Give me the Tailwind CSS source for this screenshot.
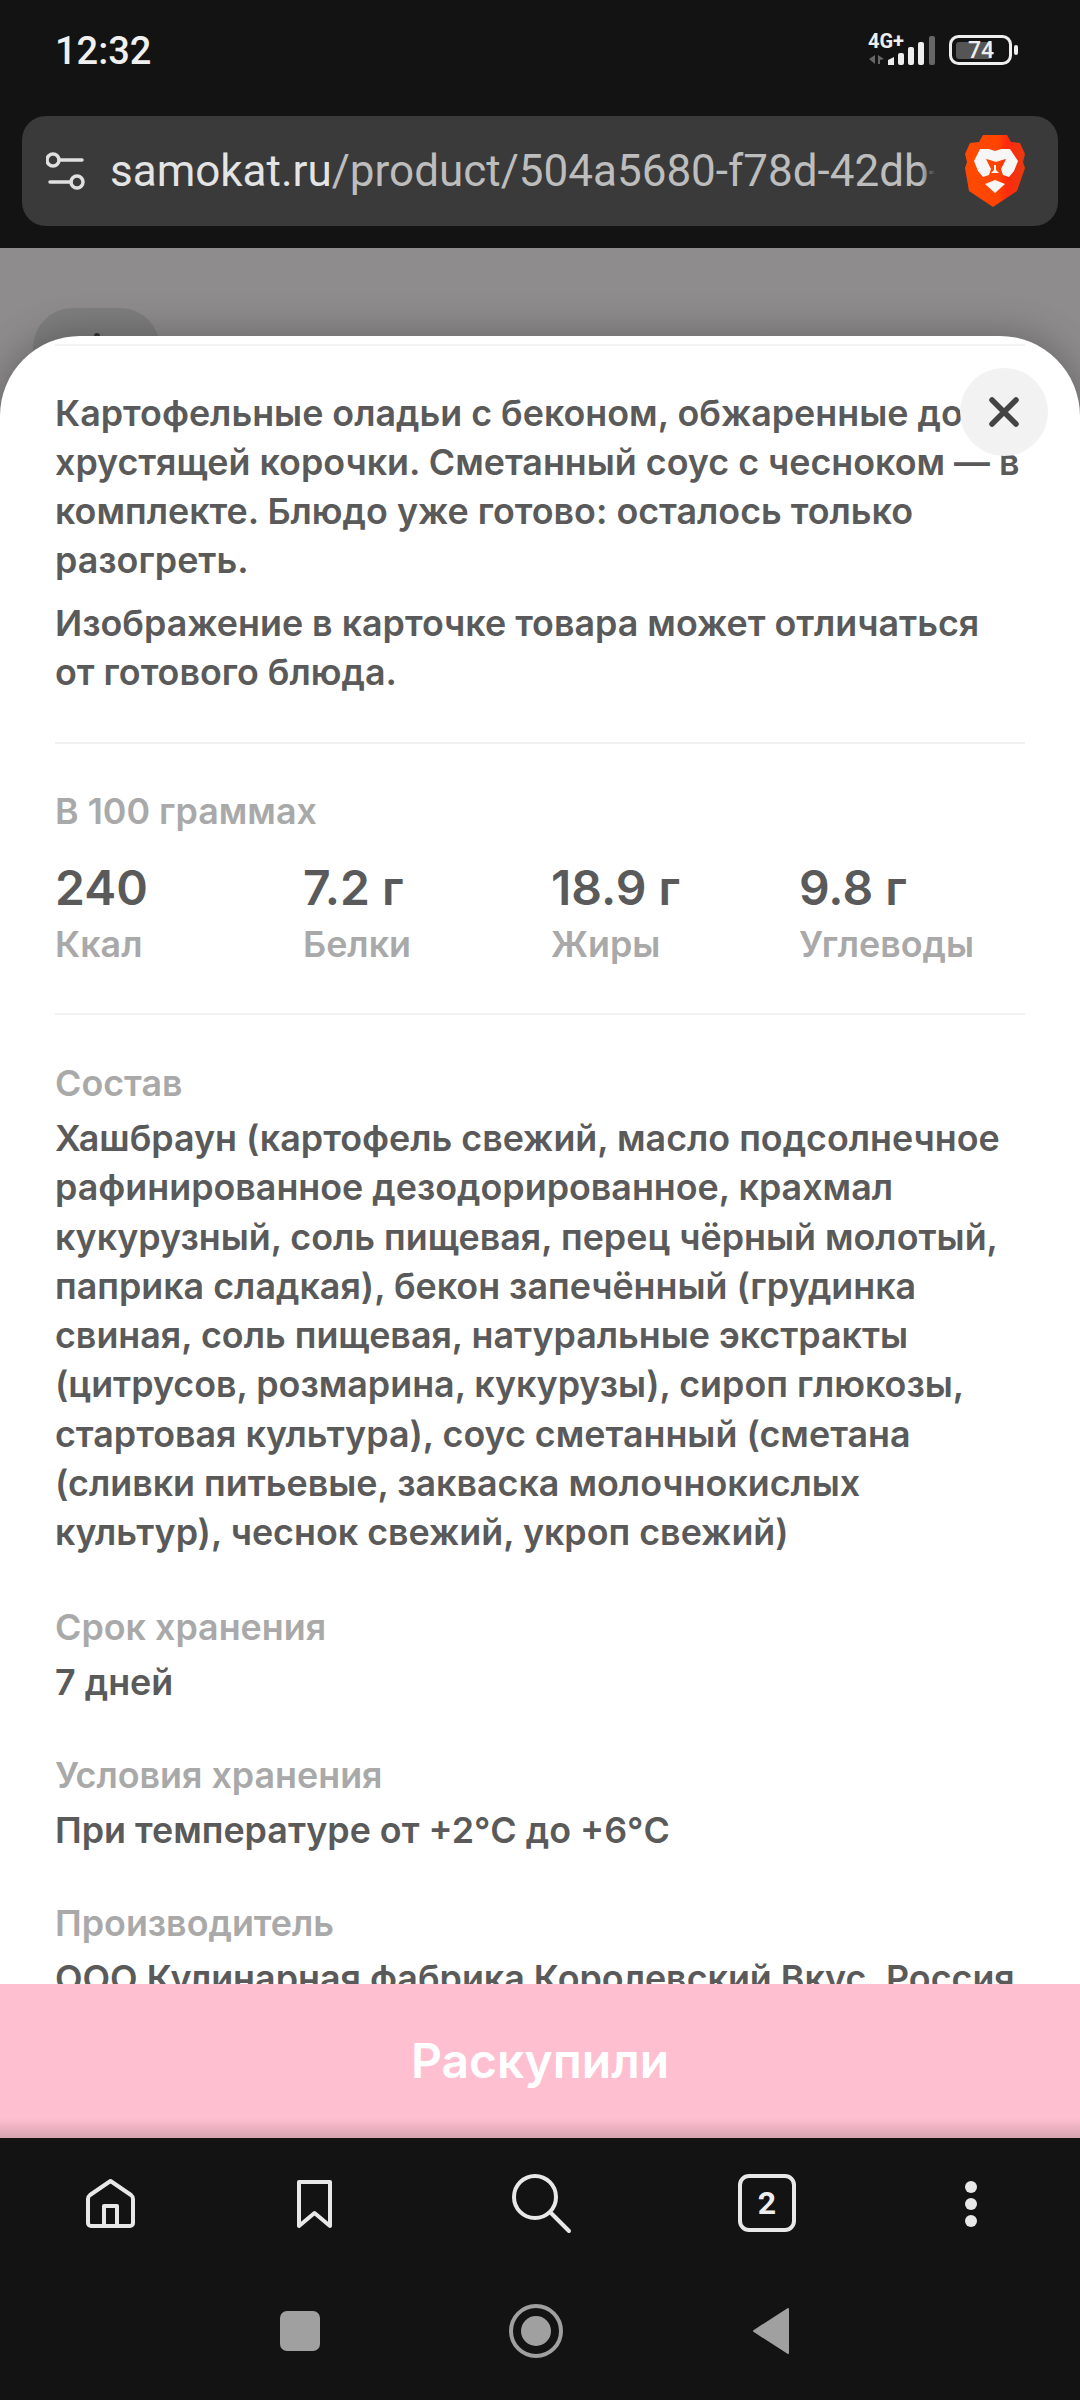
<!DOCTYPE html>
<html lang="ru">
<head>
  <meta charset="UTF-8" />
  <meta name="viewport" content="width=device-width, initial-scale=1.0" />
  <title>Samokat</title>
  <script src="https://cdn.jsdelivr.net/npm/@tailwindcss/browser@4"></script>
</head>
<body class="w-[1080px] h-[2400px] overflow-hidden bg-[#131313] font-['Inter',sans-serif] flex flex-col">
  <!-- Status bar -->
  <div class="h-[116px] shrink-0 pl-[55px] pr-[62px] pt-[30px] flex justify-between items-start">
    <span class="font-['Roboto',sans-serif] text-[38px] leading-[42px] font-medium text-[#f0f0f0]">12:32</span>
    <div class="relative w-[150px] h-[40px] mt-[4px]">
      <span class="absolute left-0 top-[-2px] font-['Roboto',sans-serif] text-[20px] leading-[18px] font-bold text-[#eee]">4G+</span>
      <svg class="absolute left-0 top-0" width="150" height="40" viewBox="868 34 150 40">
        <path d="M875 55v9l-6-5zM878 55l6 4-4 1v4h-2z" fill="#666"/>
        <path d="M888 65v-5l6-3v8z" fill="#eee"/>
        <rect x="898" y="53" width="6" height="12" rx="2" fill="#eee"/>
        <rect x="908" y="47" width="6" height="18" rx="2" fill="#eee"/>
        <rect x="918" y="42" width="6" height="23" rx="2" fill="#eee"/>
        <rect x="929" y="36" width="6" height="29" rx="2" fill="#666"/>
        <rect x="950.500" y="36.500" width="60" height="27" rx="8" fill="none" stroke="#eee" stroke-width="3"/>
        <rect x="956" y="42" width="36" height="17" rx="3" fill="#555"/>
        <rect x="1014" y="45" width="4" height="10" rx="2" fill="#eee"/>
      </svg>
      <span class="absolute left-[88px] top-[4px] w-[50px] text-center font-['Roboto',sans-serif] text-[23px] leading-[26px] font-medium text-[#eee]">74</span>
    </div>
  </div>

  <!-- Address bar -->
  <div class="mx-[22px] h-[110px] shrink-0 rounded-[24px] bg-[#3a3a3a] flex items-center pl-[24px]">
    <svg class="shrink-0" width="42" height="42" viewBox="0 0 42 42" fill="none" stroke="#e0e0e0" stroke-width="3.500" stroke-linecap="round">
      <circle cx="7" cy="10" r="6"/>
      <path d="M13 10h23M4 32h21"/>
      <circle cx="31" cy="32" r="6"/>
    </svg>
    <div class="relative ml-[22px] w-[825px] overflow-hidden whitespace-nowrap font-['Roboto',sans-serif] text-[44px] leading-[56px] text-[#bdbdbd]">
      <span class="text-[#e4e4e4]">samokat.ru</span>/product/504a5680-f78d-42db-8
      <div class="absolute right-0 inset-y-0 w-[14px] bg-gradient-to-r from-transparent to-[#3a3a3a]"></div>
    </div>
    <svg class="ml-[30px] shrink-0" width="60" height="72" viewBox="0 0 60 72">
      <defs>
        <linearGradient id="brave" x1="0" y1="0" x2="1" y2="0">
          <stop offset="0" stop-color="#ff4a00"/>
          <stop offset="0.55" stop-color="#ff4400"/>
          <stop offset="0.7" stop-color="#ff2a0d"/>
          <stop offset="1" stop-color="#e83a10"/>
        </linearGradient>
      </defs>
      <path d="M18 0h24l4 7 9 1 5 11-2 8 2 6-8 23-24 16-24-16-4-23 2-6-2-8L5 8l9-1z" fill="url(#brave)"/>
      <path d="M15 14h9l6 2 6-2h9l8 12-4 10-5 6-6-2-2-6 5-10-4 1-6 2-6-2-4-1 5 10-2 6-6 2-5-6-4-10zM29 30h2v5l3 3h-8l3-3zM20 49l10-4 10 4-10 9z" fill="#f6f6f6"/>
    </svg>
  </div>
  <div class="h-[22px] shrink-0"></div>

  <!-- Page under the sheet -->
  <main class="relative flex-1 overflow-hidden bg-gradient-to-b from-[#8e8c8c] via-[#8a8888] to-[#767575]">
    <div class="absolute left-[33px] top-[60px] w-[127px] h-[94px] rounded-[40px] bg-[#7f7e7e] flex justify-center pt-[25px]">
      <span class="w-[6px] h-[6px] rounded-t-[3px] bg-[#333]"></span>
    </div>

    <!-- Bottom sheet -->
    <section class="absolute inset-x-0 top-[88px] bottom-0 overflow-hidden bg-white rounded-t-[80px] shadow-[0_0_40px_rgba(0,0,0,0.3)]">
      <div class="mx-[55px] mt-[8px] h-[2px] bg-[#f3f3f3]"></div>
      <div class="pl-[55px] pr-[40px] pt-[43px] text-[35.850px] leading-[49px] font-semibold text-[#5a5a5a] whitespace-nowrap">
        <p>Картофельные оладьи с беконом, обжаренные до<br>хрустящей корочки. Сметанный соус с чесноком — в<br>комплекте. Блюдо уже готово: осталось только<br>разогреть.</p>
        <p class="mt-[14px]">Изображение в карточке товара может отличаться<br>от готового блюда.</p>

        <div class="mt-[45px] mr-[15px] border-t-2 border-[#f1f1f1] pt-[43px]">
          <p class="text-[#a9a9a9]">В 100 граммах</p>
          <div class="mt-[20px] grid grid-cols-[repeat(4,248px)]">
            <div><p class="text-[48px] leading-[64px] font-semibold">240</p><p class="text-[#a9a9a9]">Ккал</p></div>
            <div><p class="text-[48px] leading-[64px] font-semibold">7.2 г</p><p class="text-[#a9a9a9]">Белки</p></div>
            <div><p class="text-[48px] leading-[64px] font-semibold">18.9 г</p><p class="text-[#a9a9a9]">Жиры</p></div>
            <div><p class="text-[48px] leading-[64px] font-semibold">9.8 г</p><p class="text-[#a9a9a9]">Углеводы</p></div>
          </div>
        </div>

        <div class="mt-[44px] mr-[15px] border-t-2 border-[#f1f1f1] pt-[44px]">
          <p class="text-[#a9a9a9]">Состав</p>
          <p class="mt-[6px] leading-[49.300px]">Хашбраун (картофель свежий, масло подсолнечное<br>рафинированное дезодорированное, крахмал<br>кукурузный, соль пищевая, перец чёрный молотый,<br>паприка сладкая), бекон запечённый (грудинка<br>свиная, соль пищевая, натуральные экстракты<br>(цитрусов, розмарина, кукурузы), сироп глюкозы,<br>стартовая культура), соус сметанный (сметана<br>(сливки питьевые, закваска молочнокислых<br>культур), чеснок свежий, укроп свежий)</p>
          <p class="mt-[45px] text-[#a9a9a9]">Срок хранения</p>
          <p class="mt-[6px]">7 дней</p>
          <p class="mt-[44px] text-[#a9a9a9]">Условия хранения</p>
          <p class="mt-[6px]">При температуре от +2°C до +6°C</p>
          <p class="mt-[44px] text-[#a9a9a9]">Производитель</p>
          <p class="mt-[6px]">ООО Кулинарная фабрика Королевский Вкус, Россия</p>
        </div>
      </div>
    </section>

    <button class="absolute right-[32px] top-[120px] w-[88px] h-[88px] rounded-full bg-[#f2f2f2] flex items-center justify-center">
      <svg width="32" height="32" viewBox="0 0 32 32" fill="none" stroke="#444" stroke-width="5.500" stroke-linecap="round"><path d="M4 4l24 24M28 4L4 28"/></svg>
    </button>

    <!-- Sold out bar -->
    <div class="absolute inset-x-0 bottom-0 h-[154px] bg-[#fec0d0] flex items-center justify-center">
      <span class="text-[48px] leading-[60px] font-semibold text-white">Раскупили</span>
      <div class="absolute inset-x-0 bottom-0 h-[20px] bg-gradient-to-b from-transparent to-black/15"></div>
    </div>
  </main>

  <!-- Browser toolbar -->
  <nav class="h-[262px] shrink-0 bg-[#131313] relative">
    <div class="h-[138px] flex items-start pt-[36px] pl-[82px]">
      <svg width="56" height="60" viewBox="0 0 56 60" fill="none" stroke="#e8e8e8" stroke-width="4" stroke-linejoin="round"><path d="M6 25a5 5 0 0 1 2-4L28.500 7 49 21a5 5 0 0 1 2 4v24a3 3 0 0 1-3 3H9a3 3 0 0 1-3-3zM22 52V32h13v20"/></svg>
      <svg class="ml-[154px]" width="44" height="60" viewBox="0 0 44 60" fill="none" stroke="#e8e8e8" stroke-width="4" stroke-linejoin="round"><path d="M7 8h31v44L22.500 39 7 52z"/></svg>
      <svg class="ml-[173px] -mt-[3px]" width="64" height="64" viewBox="0 0 64 64" fill="none" stroke="#e8e8e8" stroke-width="4" stroke-linecap="round"><circle cx="26" cy="26" r="21"/><path d="M42 42l18 18"/></svg>
      <div class="ml-[165px] w-[58px] h-[58px] rounded-[11px] border-[4px] border-[#e8e8e8] flex items-center justify-center font-['Roboto',sans-serif] text-[32px] font-bold text-[#eee]">2</div>
      <div class="flex flex-col gap-[5px] mt-[7px] ml-[169px]">
        <span class="w-[12px] h-[12px] rounded-full bg-[#e8e8e8]"></span>
        <span class="w-[12px] h-[12px] rounded-full bg-[#e8e8e8]"></span>
        <span class="w-[12px] h-[12px] rounded-full bg-[#e8e8e8]"></span>
      </div>
    </div>
    <!-- System navigation -->
    <div class="flex items-center pl-[280px] h-[60px] mt-[25px]">
      <div class="w-[40px] h-[40px] rounded-[7px] bg-[#a0a0a0]"></div>
      <svg class="ml-[188px]" width="56" height="56" viewBox="0 0 56 56"><circle cx="28" cy="28" r="25" fill="none" stroke="#a0a0a0" stroke-width="4"/><circle cx="28" cy="28" r="15" fill="#a0a0a0"/></svg>
      <svg class="ml-[188px]" width="38" height="48" viewBox="0 0 38 48"><path d="M36 2v44L2 24z" fill="#a0a0a0" stroke="#a0a0a0" stroke-width="2" stroke-linejoin="round"/></svg>
    </div>
  </nav>
</body>
</html>
